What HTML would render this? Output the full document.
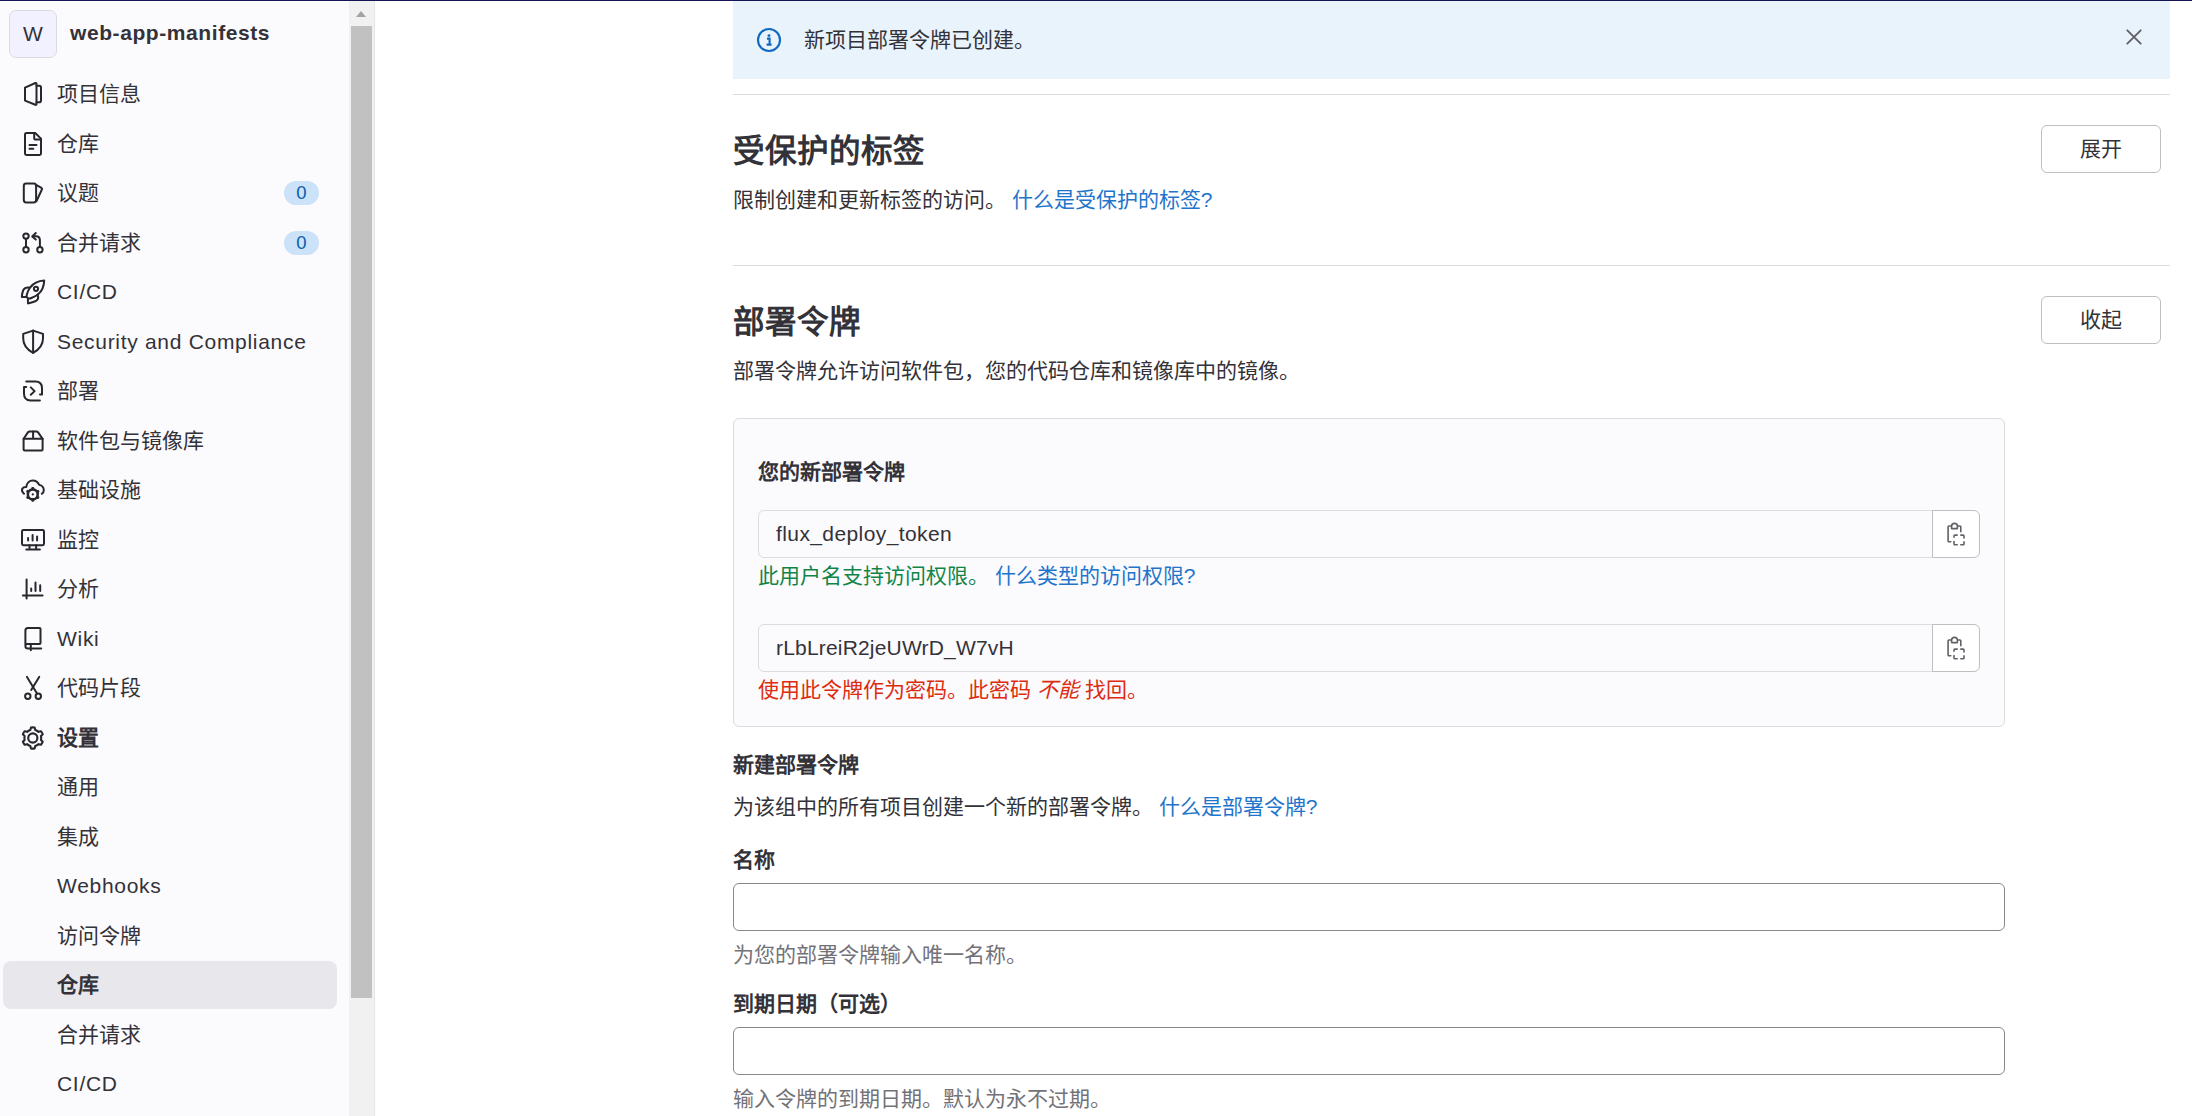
<!DOCTYPE html>
<html lang="zh-CN">
<head>
<meta charset="utf-8">
<style>
*{box-sizing:border-box;margin:0;padding:0}
html,body{width:2192px;height:1116px;overflow:hidden;background:#fff}
body{font-family:"Liberation Sans",sans-serif;color:#333238;font-size:21px;position:relative}
.topline{position:absolute;left:0;top:0;width:2192px;height:1px;background:#171456}
.sidebar{position:absolute;left:0;top:2px;width:349px;height:1114px;background:#fbfafd}
.track{position:absolute;left:349px;top:1px;width:26px;height:1115px;background:#f1f1f1;border-right:1px solid #e6e6e6}
.thumb{position:absolute;left:351px;top:26px;width:21px;height:972px;background:#c1c1c1}
.arrow{position:absolute;left:355.7px;top:11px;width:0;height:0;border-left:5.75px solid transparent;border-right:5.75px solid transparent;border-bottom:6px solid #a3a3a3}
.avatar{position:absolute;left:9px;top:10px;width:48px;height:48px;border:1px solid #dcdcde;border-radius:7px;background:#f1f1ff;text-align:center;line-height:46px;font-size:21px;color:#333238}
.pname{position:absolute;left:70px;top:21px;font-weight:bold;font-size:21px;color:#333238;white-space:nowrap}
.ic{position:absolute;left:16px;width:36px;height:36px;fill:none;stroke:#28272d;stroke-width:2;stroke-linecap:round;stroke-linejoin:round;color:#28272d}
.nt{position:absolute;left:57px;height:26px;line-height:26px;font-size:21px;color:#333238;white-space:nowrap}
.badge{position:absolute;left:284px;width:35px;height:24px;border-radius:12px;background:#cbe2f9;color:#0b5cad;font-size:18.5px;text-align:center;line-height:24px}
.active{position:absolute;left:3px;top:961px;width:334px;height:48px;border-radius:8px;background:#e8e7ec}

.main{position:absolute;left:0;top:0}
.alert{position:absolute;left:733px;top:1px;width:1437px;height:78px;background:#e9f3fc}
.hr{position:absolute;left:733px;width:1437px;height:1px;background:#dcdcde}
.abs{position:absolute;white-space:nowrap}
.h2{font-size:31.5px;font-weight:bold;color:#333238}
.p{font-size:21px;color:#333238}
a{color:#1f75cb;text-decoration:none}
.btn{position:absolute;left:2041px;width:120px;height:48px;border:1.5px solid #bfbfc3;border-radius:6px;background:#fff;text-align:center;line-height:45px;font-size:21px;color:#333238}
.card{position:absolute;left:733px;top:418px;width:1272px;height:309px;background:#fbfafd;border:1px solid #dcdcde;border-radius:6px}
.inp{position:absolute;background:#fbfafd;border:1.5px solid #dcdcde;border-radius:6px 0 0 6px}
.copy{position:absolute;left:1932px;width:48px;height:48px;background:#fff;border:1.5px solid #bfbfc3;border-radius:0 6px 6px 0}
.field{position:absolute;left:733px;width:1272px;height:48px;border:1.5px solid #89888d;border-radius:6px;background:#fff}
.b{font-weight:bold}
.muted{color:#737278}
</style>
</head>
<body>
<div class="topline"></div>
<div class="sidebar"></div>
<div class="track"></div>
<div class="arrow"></div>
<div class="thumb"></div>

<div class="avatar">W</div>
<div class="pname" style="letter-spacing:0.58px">web-app-manifests</div>

<div class="active"></div>
<svg class="ic" style="top:76px" viewBox="0 0 36 36"><path d="M9 11.6 L19.4 7 Q20.5 6.6 20.5 7.8 V28 Q20.5 29.2 19.4 28.8 L9 24.6 Z"/><path d="M20.5 9.8 H23.2 Q25 9.8 25 11.6 V24.4 Q25 26.2 23.2 26.2 H20.5"/></svg>
<div class="nt" style="top:81.0px">项目信息</div>
<svg class="ic" style="top:126px" viewBox="0 0 36 36"><path d="M10.5 7 H19.2 L25 12.6 V27.6 Q25 29 23.6 29 H10.4 Q9 29 9 27.6 V8.5 Q9 7 10.5 7 Z"/><path d="M18.2 7.2 V12 Q18.2 13.6 19.8 13.6 H25"/><path d="M13.5 19 H20.5 M13.5 22.8 H17.3"/></svg>
<div class="nt" style="top:130.5px">仓库</div>
<svg class="ic" style="top:175px" viewBox="0 0 36 36"><rect x="7.8" y="8.6" width="12.3" height="18.8" rx="2.4"/><path d="M20.6 10.2 L25.4 12.9 Q26.4 13.5 25.9 14.5 L20.4 26.2"/></svg>
<div class="nt" style="top:180.0px">议题</div>
<div class="badge" style="top:181.0px">0</div>
<svg class="ic" style="top:225px" viewBox="0 0 36 36"><circle cx="10" cy="11.1" r="2.7"/><circle cx="10" cy="24.8" r="2.7"/><circle cx="23.9" cy="24.7" r="2.7"/><path d="M10 13.8 V22.1"/><path d="M23.9 22 V15.2 Q23.9 11.3 20 11.3 H16.8"/><path d="M19.8 8 L16.2 11.4 L19.8 14.6"/></svg>
<div class="nt" style="top:229.5px">合并请求</div>
<div class="badge" style="top:230.5px">0</div>
<svg class="ic" style="top:273px" viewBox="0 0 36 36"><path d="M28.2 7.6 C22 7.9 17 10.6 13.8 14.8 C12.4 17 11.3 19.6 10.6 22.6 Q10.4 24.5 12.3 25.3 Q13.6 25.9 15.4 25 C18 23.8 20.5 22.6 22.2 21.2 C26.2 17.9 28 13 28.2 7.6 Z"/><path d="M13.6 14.6 C11 14.2 8.5 14.8 7.3 17 C6.4 19 6 21.5 5.8 23.9 L10.2 24"/><path d="M21.6 21.6 C22.6 24.2 22 26.8 19.9 28 C17.8 29.1 14.5 29.8 12 30.4 L11.9 26.2"/><circle cx="20" cy="15.8" r="2.1"/></svg>
<div class="nt" style="top:279.0px;letter-spacing:0.7px">CI/CD</div>
<svg class="ic" style="top:323px" viewBox="0 0 36 36"><path d="M17.1 7.6 L27 10.9 V15.5 C27 22 22.6 26.9 17.1 29.9 C11.6 26.9 7.2 22 7.2 15.5 V10.9 Z"/><path d="M17.1 7.6 V29.7"/></svg>
<div class="nt" style="top:328.5px;letter-spacing:0.7px">Security and Compliance</div>
<svg class="ic" style="top:373px" viewBox="0 0 36 36"><path d="M10.3 8.6 H19.4 Q26 8.6 26 15.2 V21.4 H24"/><path d="M23.9 27.4 H14.6 Q8 27.4 8 20.8 V14.1 H10.2"/><path d="M14.8 14.4 L18.6 18.1 L14.8 21.8"/></svg>
<div class="nt" style="top:378.0px">部署</div>
<svg class="ic" style="top:422px" viewBox="0 0 36 36"><path d="M7.6 16.8 L11.9 10.4 Q12.6 9.4 13.7 9.4 H20.3 Q21.4 9.4 22.1 10.4 L26.6 16.8 V27.4 Q26.6 28.4 25.6 28.4 H8.6 Q7.6 28.4 7.6 27.4 Z"/><path d="M7.6 16.8 H26.6 M17.1 9.6 V16.8"/></svg>
<div class="nt" style="top:427.5px">软件包与镜像库</div>
<svg class="ic" style="top:471px" viewBox="0 0 36 36"><path d="M8 22.8 C6 21 5.6 19 6.4 17.6 C7.2 16.3 8.7 15.8 10.3 15.9 C10.8 12 13.5 9.5 16.8 9.5 C19.8 9.5 22 11.3 23.2 13.9 C25.8 14.5 27.8 16.6 27.8 19.3 C27.8 20.7 27 22 25.8 22.8"/><path d="M16.36 17.12 A6.3 6.3 0 0 1 17.24 17.12 L17.54 18.15 A5.3 5.3 0 0 1 20.98 20.14 L22.02 19.88 A6.3 6.3 0 0 1 22.46 20.64 L21.71 21.41 A5.3 5.3 0 0 1 21.71 25.39 L22.46 26.16 A6.3 6.3 0 0 1 22.02 26.92 L20.98 26.66 A5.3 5.3 0 0 1 17.54 28.65 L17.24 29.68 A6.3 6.3 0 0 1 16.36 29.68 L16.06 28.65 A5.3 5.3 0 0 1 12.62 26.66 L11.58 26.92 A6.3 6.3 0 0 1 11.14 26.16 L11.89 25.39 A5.3 5.3 0 0 1 11.89 21.41 L11.14 20.64 A6.3 6.3 0 0 1 11.58 19.88 L12.62 20.14 A5.3 5.3 0 0 1 16.06 18.15 Z"/><circle cx="16.8" cy="23.4" r="4.3" stroke-width="1.3"/><circle cx="16.8" cy="23.4" r="1.1" fill="currentColor" stroke="none"/></svg>
<div class="nt" style="top:477.0px">基础设施</div>
<svg class="ic" style="top:521px" viewBox="0 0 36 36"><rect x="6" y="9" width="22" height="15.2" rx="1.4"/><path d="M13.5 24.2 V28.3 M20.1 24.2 V28.3 M10.3 28.4 H23.9"/><path d="M12.1 16.9 V19.6 M16.6 14 V19.6 M21.1 15.6 V19.6"/></svg>
<div class="nt" style="top:526.5px">监控</div>
<svg class="ic" style="top:570px" viewBox="0 0 36 36"><path d="M10.6 9.4 V28.4 M6.9 25.5 H26.6"/><path d="M15.2 18.4 V21 M19.5 12.4 V21 M24.2 15.2 V21"/></svg>
<div class="nt" style="top:576.0px">分析</div>
<svg class="ic" style="top:620px" viewBox="0 0 36 36"><path d="M9.4 26 V10.4 Q9.4 7.9 11.9 7.9 H23.5 Q24.5 7.9 24.5 8.9 V22.9 Q24.5 23.9 23.5 23.9 H11.2 Q9.4 23.9 9.4 25.9 Q9.4 28.4 12 28.4 H25.2"/><path d="M14.8 24 V30.2"/></svg>
<div class="nt" style="top:625.5px;letter-spacing:0.7px">Wiki</div>
<svg class="ic" style="top:669px" viewBox="0 0 36 36"><path d="M11 7.9 L21 24.4"/><path d="M23.2 7.9 L15.2 21"/><circle cx="11.8" cy="27.2" r="2.7"/><circle cx="22.3" cy="27.2" r="2.7"/></svg>
<div class="nt" style="top:675.0px">代码片段</div>
<svg class="ic" style="top:719px" viewBox="0 0 36 36"><path d="M14.96 8.56 A10.6 10.6 0 0 1 18.64 8.56 L19.26 10.97 A8.4 8.4 0 0 1 22.53 12.86 L24.92 12.19 A10.6 10.6 0 0 1 26.76 15.37 L24.98 17.11 A8.4 8.4 0 0 1 24.98 20.89 L26.76 22.63 A10.6 10.6 0 0 1 24.92 25.81 L22.53 25.14 A8.4 8.4 0 0 1 19.26 27.03 L18.64 29.44 A10.6 10.6 0 0 1 14.96 29.44 L14.34 27.03 A8.4 8.4 0 0 1 11.07 25.14 L8.68 25.81 A10.6 10.6 0 0 1 6.84 22.63 L8.62 20.89 A8.4 8.4 0 0 1 8.62 17.11 L6.84 15.37 A10.6 10.6 0 0 1 8.68 12.19 L11.07 12.86 A8.4 8.4 0 0 1 14.34 10.97 Z" stroke-width="2.1"/><circle cx="16.8" cy="19" r="4.6" stroke-width="2.1"/></svg>
<div class="nt b" style="top:724.5px">设置</div>
<div class="nt" style="top:774.0px">通用</div>
<div class="nt" style="top:823.5px">集成</div>
<div class="nt" style="top:873.0px;letter-spacing:0.7px">Webhooks</div>
<div class="nt" style="top:922.5px">访问令牌</div>
<div class="nt b" style="top:972.0px">仓库</div>
<div class="nt" style="top:1021.5px">合并请求</div>
<div class="nt" style="top:1071.0px;letter-spacing:0.7px">CI/CD</div>

<div class="alert"></div>
<svg class="abs" style="left:745px;top:16px;width:48px;height:48px" viewBox="0 0 48 48"><circle cx="24" cy="24" r="11" fill="none" stroke="#1068bf" stroke-width="2.1"/><circle cx="24" cy="19.6" r="1.45" fill="#1068bf"/><path d="M22 22.6 H24.6 V28.4 M21.6 28.6 H26.6" fill="none" stroke="#1068bf" stroke-width="2.1"/></svg>
<div class="abs p" style="left:804px;top:23px">新项目部署令牌已创建。</div>
<svg class="abs" style="left:2110px;top:13px;width:48px;height:48px" viewBox="0 0 48 48"><path d="M17.3 17.3 L30.7 30.7 M30.7 17.3 L17.3 30.7" stroke="#626168" stroke-width="1.9" stroke-linecap="round"/></svg>
<div class="hr" style="top:94px"></div>
<div class="hr" style="top:265px"></div>

<div class="abs h2" style="left:733px;top:125px">受保护的标签</div>
<div class="btn" style="top:125px">展开</div>
<div class="abs p" style="left:733px;top:183px">限制创建和更新标签的访问。 <a>什么是受保护的标签?</a></div>

<div class="abs h2" style="left:733px;top:295.5px">部署令牌</div>
<div class="btn" style="top:296px">收起</div>
<div class="abs p" style="left:733px;top:354px">部署令牌允许访问软件包，您的代码仓库和镜像库中的镜像。</div>

<div class="card"></div>
<div class="abs p b" style="left:758px;top:455px">您的新部署令牌</div>
<div class="inp" style="left:758px;top:510px;width:1175px;height:48px"></div>
<div class="copy" style="top:510px"></div>
<svg class="abs" style="left:1925px;top:505px;width:60px;height:60px" viewBox="0 0 60 60" fill="none" stroke="#626168" stroke-width="1.6" stroke-linecap="round" stroke-linejoin="round"><path d="M26.3 21 H23.9 Q23.1 21 23.1 21.8 V36 Q23.1 36.8 23.9 36.8 H25.8"/><path d="M33 21 H35 Q35.8 21 35.8 21.8 V26.8"/><path d="M26.6 23.6 V21.3 A2.9 2.9 0 0 1 32.4 21.3 V23.6 Z"/><path d="M29 32.2 V31 Q29 30.1 29.9 30.1 H32.2 M35.8 30.1 H38.1 Q39 30.1 39 31 V33 M39 36.9 V38.9 Q39 39.8 38.1 39.8 H35.8 M32.2 39.8 H29.9 Q29 39.8 29 38.9 V36.5"/></svg>
<div class="abs p" style="left:776px;top:522px;letter-spacing:0.4px">flux_deploy_token</div>
<div class="abs p" style="left:758px;top:558.5px;color:#108548">此用户名支持访问权限。 <a>什么类型的访问权限?</a></div>
<div class="inp" style="left:758px;top:624px;width:1175px;height:48px"></div>
<div class="copy" style="top:624px"></div>
<svg class="abs" style="left:1925px;top:619px;width:60px;height:60px" viewBox="0 0 60 60" fill="none" stroke="#626168" stroke-width="1.6" stroke-linecap="round" stroke-linejoin="round"><path d="M26.3 21 H23.9 Q23.1 21 23.1 21.8 V36 Q23.1 36.8 23.9 36.8 H25.8"/><path d="M33 21 H35 Q35.8 21 35.8 21.8 V26.8"/><path d="M26.6 23.6 V21.3 A2.9 2.9 0 0 1 32.4 21.3 V23.6 Z"/><path d="M29 32.2 V31 Q29 30.1 29.9 30.1 H32.2 M35.8 30.1 H38.1 Q39 30.1 39 31 V33 M39 36.9 V38.9 Q39 39.8 38.1 39.8 H35.8 M32.2 39.8 H29.9 Q29 39.8 29 38.9 V36.5"/></svg>
<div class="abs p" style="left:776px;top:636px;letter-spacing:0.18px">rLbLreiR2jeUWrD_W7vH</div>
<div class="abs p" style="left:758px;top:672.5px;color:#dd2b0e">使用此令牌作为密码。此密码 <i>不能</i> 找回。</div>

<div class="abs p b" style="left:733px;top:747.5px">新建部署令牌</div>
<div class="abs p" style="left:733px;top:790px">为该组中的所有项目创建一个新的部署令牌。 <a>什么是部署令牌?</a></div>
<div class="abs p b" style="left:733px;top:842.5px">名称</div>
<div class="field" style="top:883px"></div>
<div class="abs p muted" style="left:733px;top:938px">为您的部署令牌输入唯一名称。</div>
<div class="abs p b" style="left:733px;top:986.5px">到期日期（可选）</div>
<div class="field" style="top:1027px"></div>
<div class="abs p muted" style="left:733px;top:1081.5px">输入令牌的到期日期。默认为永不过期。</div>

</body>
</html>
